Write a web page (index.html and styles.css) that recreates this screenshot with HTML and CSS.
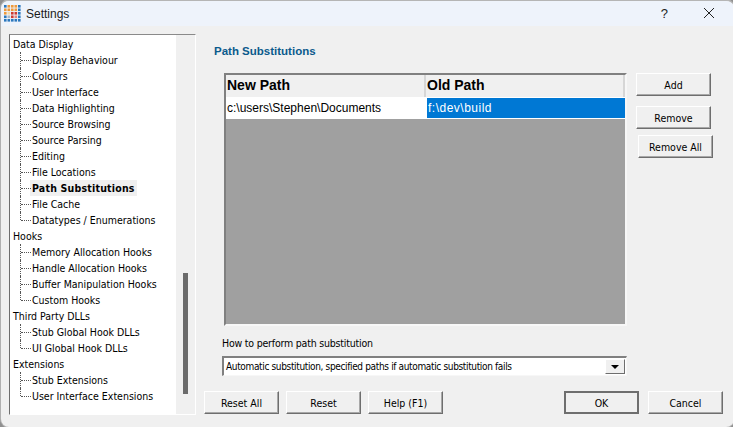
FILE: index.html
```html
<!DOCTYPE html>
<html lang="en">
<head>
<meta charset="utf-8">
<title>Settings</title>
<link rel="stylesheet" href="styles.css">
</head>
<body>
<div class="window">
  <header class="titlebar">
    <svg class="appicon" width="17" height="17" viewBox="0 0 17 17">
      <g fill="#ee9a3c"><rect x="3.5" y="0" width="2.6" height="2.6"/><rect x="7" y="0" width="2.6" height="2.6"/><rect x="10.5" y="0" width="2.6" height="2.6"/><rect x="0" y="3.5" width="2.6" height="2.6"/><rect x="3.5" y="3.5" width="2.6" height="2.6"/><rect x="7" y="3.5" width="2.6" height="2.6"/><rect x="10.5" y="3.5" width="2.6" height="2.6"/><rect x="0" y="7" width="2.6" height="2.6"/></g>
      <g fill="#f4d9a8"><rect x="3.5" y="7" width="2.6" height="2.6"/></g>
      <g fill="#cf3a32"><rect x="7" y="7" width="2.6" height="2.6"/><rect x="10.5" y="7" width="2.6" height="2.6"/><rect x="7" y="10.5" width="2.6" height="2.6"/></g>
      <g fill="#e2827a"><rect x="10.5" y="10.5" width="2.6" height="2.6"/></g>
      <g fill="#a9b6c4"><rect x="3.5" y="10.5" width="2.6" height="2.6"/></g>
      <g fill="#2b78bd"><rect x="0" y="0" width="2.6" height="2.6"/><rect x="14" y="0" width="2.6" height="2.6"/><rect x="14" y="3.5" width="2.6" height="2.6"/><rect x="14" y="7" width="2.6" height="2.6"/><rect x="0" y="10.5" width="2.6" height="2.6"/><rect x="14" y="10.5" width="2.6" height="2.6"/><rect x="0" y="14" width="2.6" height="2.6"/><rect x="3.5" y="14" width="2.6" height="2.6"/><rect x="7" y="14" width="2.6" height="2.6"/><rect x="10.5" y="14" width="2.6" height="2.6"/><rect x="14" y="14" width="2.6" height="2.6"/></g>
    </svg>
    <span class="title">Settings</span>
    <span class="help">?</span>
    <svg class="close" width="12" height="12" viewBox="0 0 12 12"><path d="M1 1 L11 11 M11 1 L1 11" stroke="#222" stroke-width="1" fill="none"/></svg>
  </header>
  <div class="body">
    <nav class="tree">
      <div class="tree-list">
        <div class="node">Data Display</div>
        <div class="child">Display Behaviour</div>
        <div class="child">Colours</div>
        <div class="child">User Interface</div>
        <div class="child">Data Highlighting</div>
        <div class="child">Source Browsing</div>
        <div class="child">Source Parsing</div>
        <div class="child">Editing</div>
        <div class="child">File Locations</div>
        <div class="child"><span class="selected">Path Substitutions</span></div>
        <div class="child">File Cache</div>
        <div class="child last">Datatypes / Enumerations</div>
        <div class="node">Hooks</div>
        <div class="child">Memory Allocation Hooks</div>
        <div class="child">Handle Allocation Hooks</div>
        <div class="child">Buffer Manipulation Hooks</div>
        <div class="child last">Custom Hooks</div>
        <div class="node">Third Party DLLs</div>
        <div class="child">Stub Global Hook DLLs</div>
        <div class="child last">UI Global Hook DLLs</div>
        <div class="node">Extensions</div>
        <div class="child">Stub Extensions</div>
        <div class="child last">User Interface Extensions</div>
      </div>
      <div class="scrollbar"><div class="thumb"></div></div>
    </nav>
    <main class="panel">
      <h1 class="heading">Path Substitutions</h1>
      <div class="editor">
        <div class="grid">
          <div class="grid-head">
            <div class="col col-new">New Path</div>
            <div class="col col-old">Old Path</div>
          </div>
          <div class="grid-row">
            <div class="cell cell-new">c:\users\Stephen\Documents</div>
            <div class="cell cell-selected">f:\dev\build</div>
          </div>
        </div>
        <div class="side">
          <button class="btn">Add</button>
          <button class="btn btn-remove">Remove</button>
          <button class="btn btn-removeall">Remove All</button>
        </div>
      </div>
      <label class="combo-label">How to perform path substitution</label>
      <div class="combo">
        <span class="combo-text">Automatic substitution, specified paths if automatic substitution fails</span>
        <span class="combo-arrow"><svg width="8" height="4" viewBox="0 0 8 4"><path d="M0 0H8L4 4Z" fill="#000"/></svg></span>
      </div>
      <footer class="footer">
        <button class="btn">Reset All</button>
        <button class="btn">Reset</button>
        <button class="btn btn-help">Help (F1)</button>
        <span class="spacer"></span>
        <button class="btn btn-default">OK</button>
        <button class="btn">Cancel</button>
      </footer>
    </main>
  </div>
</div>
</body>
</html>
```
FILE: styles.css
```css
* { box-sizing: border-box; }
html, body { margin: 0; height: 100%; }
body { background: #8f8f8f; overflow: hidden; font: 10.5px/16px "DejaVu Sans Condensed", "DejaVu Sans", sans-serif; font-stretch: condensed; color: #000; }
.window { width: 733px; height: 427px; margin-left: 1px; background: #f0f0f0; border-radius: 8px; border-top: 1px solid #b5b5b5; overflow: hidden; display: flex; flex-direction: column; box-shadow: 0 0 0 1px #b0b0b0; }
.titlebar { height: 25px; background: #eef3fb; display: flex; align-items: center; flex: none; }
.appicon { margin-left: 3px; }
.title { margin-left: 5px; font: 12px/16px "Liberation Sans", Arial, sans-serif; color: #1a1a1a; }
.help { margin-left: auto; font: 13px/16px "Liberation Sans", Arial, sans-serif; color: #222; }
.close { margin: 0 19px 2px 35px; }
.body { flex: 1; display: flex; padding-left: 8px; }
.tree { width: 187px; height: 381px; margin-top: 8px; background: #fff; border: 1px solid; border-color: #8a8a8a #fff #fff #6e6e6e; display: flex; padding-left: 1px; }
.tree-list { flex: 1; padding-top: 1px; padding-left: 2px; background: #fff; }
.node { height: 16px; }
.child { height: 16px; padding-left: 19px; position: relative; white-space: nowrap; }
.child::before { content: ""; position: absolute; left: 7px; top: 0; height: 16px; border-left: 1px dotted #555; }
.child.last::before { height: 8px; }
.child::after { content: ""; position: absolute; left: 8px; top: 8px; width: 10px; border-top: 1px dotted #555; }
.selected { display: inline-block; font-weight: bold; letter-spacing: 0.2px; background: #f0f0f0; padding: 0 2px 0 2px; margin-left: -2px; }
.scrollbar { width: 19px; background: #f0f0f0; padding: 238px 7px 0 7px; flex: none; }
.thumb { width: 5px; height: 121px; background: #6b6b6b; }
.panel { flex: 1; padding-left: 8px; padding-right: 11px; display: flex; flex-direction: column; }
.heading { margin: 17px 0 0 10px; font: bold 11.5px/16px "Liberation Sans", Arial, sans-serif; color: #0b5a8c; }
.editor { display: flex; margin-top: 14px; margin-left: 20px; align-items: flex-start; }
.grid { width: 403px; height: 253px; background: #a0a0a0; border: 2px solid; border-color: #808080 #f7f7f7 #f7f7f7 #808080; flex: none; }
.grid-head { height: 22px; display: flex; background: #f0f0f0; font: bold 14px/20px "Liberation Sans", Arial, sans-serif; }
.col { padding-left: 1px; }
.col-new { width: 200px; border-right: 2px solid #d6d6d6; flex: none; }
.col-old { flex: 1; border-right: 2px solid #d6d6d6; }
.grid-row { height: 22px; display: flex; background: #fff; padding: 1px 0; font: 12px/20px "Liberation Sans", Arial, sans-serif; }
.cell-new { width: 201px; padding-left: 1px; flex: none; }
.cell-selected { flex: 1; background: #0078d4; color: #fff; padding-left: 1px; letter-spacing: 0.5px; }
.side { display: flex; flex-direction: column; margin-left: 9px; }
.btn { width: 75px; height: 23px; padding: 0; background: #f0f0f0; font: 10.5px/16px "DejaVu Sans Condensed", "DejaVu Sans", sans-serif; font-stretch: condensed; color: #000; border: 1px solid; border-color: #fff #6e6e6e #6e6e6e #fff; box-shadow: inset -1px -1px 0 #a8a8a8; }
.btn-remove { margin-top: 10px; }
.btn-removeall { margin-top: 6px; margin-left: 2px; }
.combo-label { margin: 9px 0 0 18px; height: 16px; letter-spacing: -0.2px; }
.combo { margin: 5px 0 0 18px; width: 405px; height: 20px; display: flex; background: #fff; border: 2px solid; border-color: #808080 #f7f7f7 #f7f7f7 #808080; border-bottom-width: 1px; border-right-width: 1px; align-items: center; padding: 0 1px 0 2px; }
.combo-text { flex: 1; white-space: nowrap; font-size: 10px; letter-spacing: -0.35px; padding-top: 1px; }
.combo-arrow { width: 20px; height: 15px; background: #f0f0f0; border: 1px solid; border-color: #fff #6e6e6e #6e6e6e #fff; display: flex; align-items: center; justify-content: center; }
.footer { display: flex; margin-top: 15px; }
.footer .btn + .btn { margin-left: 7px; }
.footer .btn-help { margin-left: 9px; }
.spacer { flex: 1; }
.btn-default { border: 2px solid #6e6e6e; box-shadow: none; }
.footer .btn-default + .btn { margin-left: 9px; }
```
